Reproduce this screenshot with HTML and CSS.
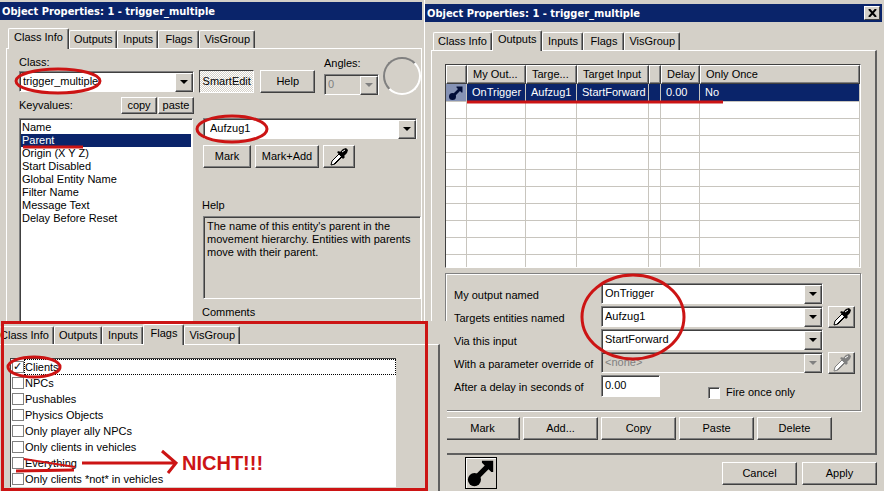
FILE: index.html
```html
<!DOCTYPE html>
<html lang="en">
<head>
  <meta charset="UTF-8">
  <meta name="viewport" content="width=device-width, initial-scale=1.0">
  <title>Object Properties</title>
  <link rel="stylesheet" href="styles.css">
</head>
<body>
  <svg class="sprite" aria-hidden="true">
    <symbol id="dropper" viewBox="0 0 20 20">
      <path d="M2 18 L3 14 L10 7 L13 10 L6 17 Z" fill="#fff" stroke="currentColor" stroke-width="1"/>
      <path d="M5 17 L12 10" stroke="currentColor" stroke-width="1"/>
      <path d="M8 5 L10 4 L11 5 L14 2 L17 1 L19 3 L18 6 L15 9 L16 10 L14 12 Z" fill="currentColor"/>
      <path d="M13 5 L16 3" stroke="#fff" stroke-width="1"/>
    </symbol>
    <symbol id="output" viewBox="0 0 32 32">
      <circle cx="9" cy="23" r="7" fill="currentColor"/>
      <path d="M11 17 L20 8 L17 5 V3 H29 V15 H27 L24 12 L15 21 Z" fill="currentColor"/>
    </symbol>
  </svg>

  <div class="desktop">
    <section class="window window-class">
      <h1 class="titlebar">Object Properties: 1 - trigger_multiple</h1>
      <nav class="tabs">
        <button class="tab active">Class Info</button>
        <button class="tab">Outputs</button>
        <button class="tab">Inputs</button>
        <button class="tab">Flags</button>
        <button class="tab">VisGroup</button>
      </nav>
      <div class="page class-page">
        <div class="class-left">
          <label for="class">Class:</label>
          <div class="combo">
            <select id="class"><option>trigger_multiple</option></select>
          </div>
          <div class="key-head">
            <label for="keys">Keyvalues:</label>
            <button class="btn small">copy</button>
            <button class="btn small">paste</button>
          </div>
          <select class="listbox" id="keys" size="15">
            <option>Name</option>
            <option selected>Parent</option>
            <option>Origin (X Y Z)</option>
            <option>Start Disabled</option>
            <option>Global Entity Name</option>
            <option>Filter Name</option>
            <option>Message Text</option>
            <option>Delay Before Reset</option>
          </select>
        </div>
        <div class="class-right">
          <div class="edit-row">
            <button class="btn pressed">SmartEdit</button>
            <button class="btn help">Help</button>
            <div class="angles">
              <label for="angles">Angles:</label>
              <div class="combo disabled">
                <select id="angles" disabled><option>0</option></select>
              </div>
            </div>
            <span class="dial"></span>
          </div>
          <div class="combo value">
            <select aria-label="Value"><option>Aufzug1</option></select>
          </div>
          <div class="mark-row">
            <button class="btn">Mark</button>
            <button class="btn wide">Mark+Add</button>
            <button class="btn pick" aria-label="Pick"><svg><use href="#dropper"/></svg></button>
          </div>
          <h2 class="caption">Help</h2>
          <p class="help-text">The name of this entity's parent in the movement hierarchy. Entities with parents move with their parent.</p>
          <h2 class="caption">Comments</h2>
        </div>
      </div>
      <svg class="marks" width="424" height="320" aria-hidden="true">
        <ellipse cx="58" cy="81" rx="42" ry="12"/>
        <ellipse cx="232" cy="129" rx="35" ry="13"/>
        <path d="M23 147 H83"/>
      </svg>
    </section>

    <section class="window window-outputs">
      <header class="titlebar">
        <h1>Object Properties: 1 - trigger_multiple</h1>
        <button class="close" aria-label="Close"><svg viewBox="0 0 9 8"><path d="M1 0 L8 8 M8 0 L1 8" stroke="#000" stroke-width="2"/></svg></button>
      </header>
      <nav class="tabs">
        <button class="tab">Class Info</button>
        <button class="tab active">Outputs</button>
        <button class="tab">Inputs</button>
        <button class="tab">Flags</button>
        <button class="tab">VisGroup</button>
      </nav>
      <div class="page outputs-page">
        <div class="table-box">
          <table>
            <colgroup>
              <col class="c-icon"><col class="c-out"><col class="c-target"><col class="c-input"><col class="c-param"><col class="c-delay"><col>
            </colgroup>
            <thead>
              <tr><th></th><th>My Out...</th><th>Targe...</th><th>Target Input</th><th></th><th>Delay</th><th>Only Once</th></tr>
            </thead>
            <tbody>
              <tr class="selected"><td class="icon"><svg><use href="#output"/></svg></td><td>OnTrigger</td><td>Aufzug1</td><td>StartForward</td><td></td><td>0.00</td><td>No</td></tr>
              <tr><td></td><td></td><td></td><td></td><td></td><td></td><td></td></tr>
              <tr><td></td><td></td><td></td><td></td><td></td><td></td><td></td></tr>
              <tr><td></td><td></td><td></td><td></td><td></td><td></td><td></td></tr>
              <tr><td></td><td></td><td></td><td></td><td></td><td></td><td></td></tr>
              <tr><td></td><td></td><td></td><td></td><td></td><td></td><td></td></tr>
              <tr><td></td><td></td><td></td><td></td><td></td><td></td><td></td></tr>
              <tr><td></td><td></td><td></td><td></td><td></td><td></td><td></td></tr>
              <tr><td></td><td></td><td></td><td></td><td></td><td></td><td></td></tr>
              <tr><td></td><td></td><td></td><td></td><td></td><td></td><td></td></tr>
              <tr><td></td><td></td><td></td><td></td><td></td><td></td><td></td></tr>
            </tbody>
          </table>
        </div>
        <div class="group">
          <label for="out">My output named</label>
          <div class="combo"><select id="out"><option>OnTrigger</option></select></div>
          <span></span>
          <label for="target">Targets entities named</label>
          <div class="combo"><select id="target"><option>Aufzug1</option></select></div>
          <button class="btn pick" aria-label="Pick target"><svg><use href="#dropper"/></svg></button>
          <label for="via">Via this input</label>
          <div class="combo"><select id="via"><option>StartForward</option></select></div>
          <span></span>
          <label for="param">With a parameter override of</label>
          <div class="combo disabled"><select id="param" disabled><option>&lt;none&gt;</option></select></div>
          <button class="btn pick" aria-label="Pick parameter" disabled><svg><use href="#dropper"/></svg></button>
          <label for="delay">After a delay in seconds of</label>
          <div class="delay-row">
            <input class="edit" type="text" id="delay" value="0.00">
            <label class="check"><input type="checkbox">Fire once only</label>
          </div>
        </div>
        <div class="actions">
          <button class="btn">Mark</button>
          <button class="btn">Add...</button>
          <button class="btn">Copy</button>
          <button class="btn">Paste</button>
          <button class="btn">Delete</button>
        </div>
      </div>
      <footer class="footer">
        <span class="out-icon"><svg><use href="#output"/></svg></span>
        <button class="btn">Cancel</button>
        <button class="btn">Apply</button>
      </footer>
      <svg class="marks" width="459" height="490" aria-hidden="true">
        <path d="M42 102 H298"/>
        <ellipse cx="208" cy="317" rx="51" ry="42"/>
      </svg>
    </section>

    <section class="window window-flags">
      <nav class="tabs">
        <button class="tab">Class Info</button>
        <button class="tab">Outputs</button>
        <button class="tab">Inputs</button>
        <button class="tab active">Flags</button>
        <button class="tab">VisGroup</button>
      </nav>
      <div class="page flags-page">
        <div class="flag-list">
          <label class="flag focused"><input type="checkbox" checked><span>Clients</span></label>
          <label class="flag"><input type="checkbox"><span>NPCs</span></label>
          <label class="flag"><input type="checkbox"><span>Pushables</span></label>
          <label class="flag"><input type="checkbox"><span>Physics Objects</span></label>
          <label class="flag"><input type="checkbox"><span>Only player ally NPCs</span></label>
          <label class="flag"><input type="checkbox"><span>Only clients in vehicles</span></label>
          <label class="flag"><input type="checkbox"><span>Everything</span></label>
          <label class="flag"><input type="checkbox"><span>Only clients *not* in vehicles</span></label>
        </div>
      </div>
      <div class="red-frame"></div>
      <svg class="marks" width="424" height="170">
        <ellipse cx="34" cy="46" rx="26" ry="10"/>
        <path d="M16 150 L74 149"/>
        <path class="thin" d="M24 138 L75 146"/>
        <path d="M82 142 H175 M162 130 L176 142 L168 152"/>
        <text x="182" y="149">NICHT!!!</text>
      </svg>
    </section>
  </div>
</body>
</html>
```

FILE: styles.css
```css
* {
  margin: 0;
  padding: 0;
  box-sizing: border-box;
}
body {
  font-family: "Liberation Sans", Arial, sans-serif;
  font-size: 11px;
  line-height: 13px;
  color: #000;
  background-color: #d4d0c8;
}
button, select, input {
  font: inherit;
  color: inherit;
}
.sprite {
  display: none;
}
.desktop {
  display: grid;
  grid-template-columns: minmax(0, 425fr) minmax(0, 22fr) minmax(0, 437fr);
  grid-template-rows: 321px auto;
  min-height: 100vh;
}
.window {
  position: relative;
  display: flex;
  flex-direction: column;
  background-color: #d4d0c8;
}
.window-class {
  grid-column: 1;
  grid-row: 1;
  padding: 2px 2px 0 0;
  border-right: 1px solid #fff;
  overflow: hidden;
}
.window-outputs {
  grid-column: 2 / 4;
  grid-row: 1 / 3;
  padding: 4px 2px 0 0;
}
.window-flags {
  grid-column: 1 / 3;
  grid-row: 2;
  z-index: 1;
  padding: 3px 7px 0 0;
}

/* title bar */
.titlebar {
  display: flex;
  flex-shrink: 0;
  align-items: center;
  justify-content: space-between;
  height: 18px;
  padding: 0 2px;
  background-color: #0a246a;
  color: #fff;
}
.titlebar, .titlebar h1 {
  font-family: "DejaVu Sans Condensed", "Noto Sans", sans-serif;
  font-size: 11px;
  font-weight: bold;
}
.close {
  display: flex;
  align-items: center;
  justify-content: center;
  width: 16px;
  height: 14px;
  background-color: #d4d0c8;
  border: 1px solid;
  border-color: #fff #404040 #404040 #fff;
}
.close svg {
  width: 9px;
  height: 8px;
}

/* tabs */
.tabs {
  display: flex;
  flex-shrink: 0;
  align-items: flex-end;
  height: 28px;
  padding-left: 8px;
}
.window-flags .tabs {
  height: 20px;
  padding-left: 0;
}
.tab {
  height: 18px;
  min-width: 41px;
  padding: 0 4px;
  white-space: nowrap;
  background-color: #d4d0c8;
  border: 1px solid;
  border-color: #fff #404040 transparent #fff;
  border-bottom: 0;
  border-radius: 2px 2px 0 0;
  box-shadow: inset -1px 0 #808080;
}
.tab.active {
  position: relative;
  z-index: 1;
  height: 21px;
  padding: 0 5px 3px;
  margin-bottom: -1px;
}
.window-flags .tab:first-child {
  padding-left: 0;
  border-left: 0;
}
.page {
  border-top: 1px solid #fff;
}

/* buttons */
.btn {
  height: 23px;
  background-color: #d4d0c8;
  border: 1px solid;
  border-color: #fff #404040 #404040 #fff;
  box-shadow: inset -1px -1px #808080;
}
.btn.small {
  width: 36px;
  height: 17px;
}
.btn.pressed {
  width: 56px;
  background: repeating-conic-gradient(#fff 0 25%, #d4d0c8 0 50%) 0 0 / 2px 2px;
  border-color: #404040 #fff #fff #404040;
  box-shadow: none;
}
.btn.pick {
  display: flex;
  align-items: center;
  justify-content: center;
}
.btn.pick svg {
  width: 20px;
  height: 20px;
}
.btn.pick:disabled {
  color: #808080;
}

/* combo boxes */
.combo {
  position: relative;
  height: 21px;
  background-color: #fff;
  border: 1px solid;
  border-color: #808080 #fff #fff #808080;
  box-shadow: inset 1px 1px #404040;
}
.combo select {
  display: block;
  width: 100%;
  height: 100%;
  padding: 0 18px 1px 3px;
  appearance: none;
  background: transparent;
  border: 0;
  border-radius: 0;
  opacity: 1;
}
.combo::before {
  content: "";
  position: absolute;
  top: 1px;
  right: 0;
  width: 16px;
  height: 17px;
  background-color: #d4d0c8;
  border: 1px solid;
  border-color: #fff #404040 #404040 #fff;
  box-shadow: inset -1px -1px #808080;
  pointer-events: none;
}
.combo::after {
  content: "";
  position: absolute;
  top: 8px;
  right: 5px;
  border: 4px solid transparent;
  border-top-color: #000;
  border-bottom: 0;
  pointer-events: none;
}
.combo.disabled {
  background-color: #d4d0c8;
}
.combo.disabled select {
  color: #808080;
}
.combo.disabled::after {
  border-top-color: #808080;
}

/* class info */
.class-page {
  flex: 1;
  display: grid;
  grid-template-columns: 175px minmax(0, 1fr);
  column-gap: 5px;
  margin-left: 6px;
  padding-left: 12px;
  border-left: 1px solid #fff;
  border-right: 1px solid #fff;
}
.class-left {
  display: flex;
  flex-direction: column;
  padding-top: 7px;
}
.class-left .combo {
  flex-shrink: 0;
  margin-top: 2px;
}
.key-head {
  display: flex;
  align-items: center;
  gap: 1px;
  margin: 5px 0 4px;
}
.key-head label {
  flex: 1;
}
.listbox {
  width: 174px;
  height: 204px;
  background-color: #fff;
  border: 1px solid;
  border-color: #808080 #fff #fff #808080;
  border-radius: 0;
  box-shadow: inset 1px 1px #404040;
  padding: 2px 1px;
  overflow: hidden;
}
.listbox option {
  height: 13px;
  min-height: 13px;
  line-height: 13px;
  padding: 0 1px;
}
.listbox option:checked {
  background: linear-gradient(#0a246a, #0a246a);
  color: #fff !important;
}
.class-right {
  padding-top: 7px;
}
.edit-row {
  display: flex;
  align-items: flex-end;
  height: 39px;
}
.edit-row .btn {
  margin: 0 0 2px;
}
.edit-row .btn.help {
  width: 55px;
  margin-left: 6px;
}
.angles {
  width: 56px;
  margin-left: 9px;
}
.angles .combo {
  margin-top: 4px;
}
.dial {
  width: 38px;
  height: 38px;
  margin-left: 4px;
  border: 2px solid;
  border-color: #808080 #fff #fff #808080;
  border-radius: 50%;
}
.combo.value {
  margin: 23px 4px 0;
}
.combo.value select {
  padding-left: 6px;
}
.mark-row {
  display: flex;
  gap: 4px;
  margin: 6px 0 31px 4px;
}
.mark-row .btn {
  width: 48px;
}
.mark-row .btn.wide {
  width: 64px;
}
.mark-row .btn.pick {
  width: 32px;
}
.caption {
  font-size: 11px;
  font-weight: normal;
  margin-left: 3px;
}
.help-text {
  height: 83px;
  margin: 4px 0 7px 4px;
  padding: 3px;
  border: 1px solid;
  border-color: #808080 #fff #fff #808080;
  box-shadow: inset 1px 1px #404040;
}

/* outputs */
.outputs-page {
  margin: 0 5px 0 6px;
  padding: 13px 14px 13px 13px;
  border-left: 1px solid #fff;
  border-right: 2px solid #606060;
  border-bottom: 2px solid #606060;
}
.table-box {
  height: 204px;
  overflow: hidden;
  background-color: #fff;
  border: 1px solid;
  border-color: #404040 #fff #fff #404040;
}
table {
  width: 100%;
  table-layout: fixed;
  border-collapse: separate;
  border-spacing: 0;
}
.c-icon { width: 21px; }
.c-out { width: 59px; }
.c-target { width: 51px; }
.c-input { width: 72px; }
.c-param { width: 12px; }
.c-delay { width: 39px; }
th {
  height: 19px;
  padding: 0 5px;
  font-weight: normal;
  text-align: left;
  white-space: nowrap;
  background-color: #d4d0c8;
  border: 1px solid;
  border-color: #fff #404040 #404040 #fff;
  box-shadow: inset -1px -1px #808080;
}
td {
  height: 17px;
  padding: 0 5px;
  white-space: nowrap;
  border-right: 1px solid #c8c5be;
  border-bottom: 1px solid #c8c5be;
}
th:empty, td:empty {
  padding: 0;
}
.selected td {
  height: 18px;
  background-color: #0a246a;
  color: #fff;
}
.selected .icon {
  padding: 0 2px;
  background-color: #8592b5;
  color: #000c38;
}
.icon svg {
  display: block;
  width: 16px;
  height: 16px;
}
.group {
  display: grid;
  grid-template-columns: 147px minmax(0, 1fr) 27px;
  grid-auto-rows: 21px;
  gap: 2px 0;
  margin-top: 5px;
  padding: 9px 5px 14px 8px;
  border: 1px solid #808080;
  box-shadow: inset 1px 1px #fff, 1px 1px #fff;
}
.group > label {
  padding-top: 6px;
}
.group .combo {
  margin-right: 5px;
}
.group .btn.pick {
  height: 22px;
}
.delay-row {
  display: flex;
  align-items: flex-start;
}
.edit {
  width: 59px;
  height: 22px;
  padding: 0 3px 2px;
  background-color: #fff;
  border: 1px solid;
  border-color: #808080 #fff #fff #808080;
  box-shadow: inset 1px 1px #404040;
}
.check {
  display: flex;
  align-items: center;
  gap: 6px;
  margin: 11px 0 0 48px;
}
input[type="checkbox"] {
  appearance: none;
  width: 12px;
  height: 12px;
  background-color: #fff;
  border: 1px solid #808080;
}
.check input[type="checkbox"] {
  border-color: #808080 #fff #fff #808080;
  box-shadow: inset 1px 1px #404040;
}
.actions {
  display: flex;
  gap: 3px;
  margin-top: 6px;
}
.actions .btn, .footer .btn {
  width: 75px;
}
.footer {
  display: flex;
  align-items: center;
  gap: 5px;
  padding: 2px 5px 0 40px;
}
.out-icon {
  width: 32px;
  height: 32px;
  margin-right: auto;
  border: 1px solid #000;
  box-shadow: inset 1px 1px #fff;
}
.out-icon svg {
  display: block;
  width: 30px;
  height: 30px;
}

/* flags */
.flags-page {
  flex: 1;
  padding: 13px 42px 0 10px;
  border-right: 2px solid #606060;
}
.flag-list {
  padding-left: 1px;
  background-color: #fff;
  border-top: 1px solid #404040;
  border-left: 1px solid #404040;
}
.flag {
  display: flex;
  align-items: center;
  height: 16px;
}
.flag span {
  flex: 1;
  line-height: 14px;
  border: 1px solid transparent;
}
.flag.focused span {
  border: 1px dotted #000;
}
.flag input:checked::before {
  content: "✓";
  display: block;
  font: bold 11px/10px "DejaVu Sans", sans-serif;
}

/* red pen marks */
.red-frame {
  position: absolute;
  inset: 0 19px 0 1px;
  border: 3px solid #cc1414;
  pointer-events: none;
}
.marks {
  position: absolute;
  top: 0;
  left: 0;
  fill: none;
  stroke: #cc1414;
  stroke-width: 3px;
  pointer-events: none;
}
.marks .thin {
  stroke-width: 2px;
}
.marks text {
  fill: #cc1414;
  stroke: none;
  font-size: 20px;
  font-weight: bold;
}
```
